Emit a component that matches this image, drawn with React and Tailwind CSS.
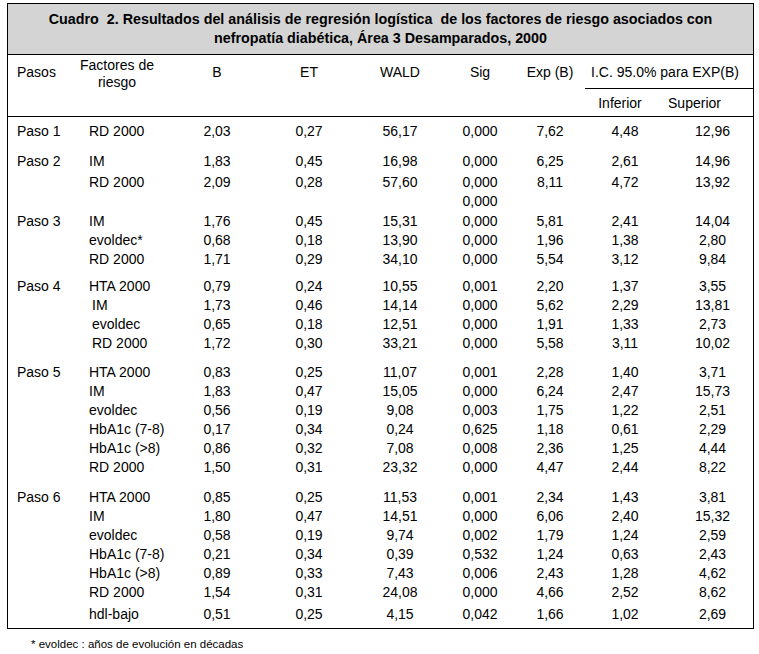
import React from "react";

const COLS = "grid grid-cols-[72px_91px_92px_92px_90px_70px_70px_70px_98px]";

const groups = [
  {
    paso: "Paso 1",
    mt: "mt-[5px]",
    rows: [["RD 2000", "2,03", "0,27", "56,17", "0,000", "7,62", "4,48", "12,96"]],
  },
  {
    paso: "Paso 2",
    mt: "mt-[11px]",
    rows: [
      ["IM", "1,83", "0,45", "16,98", "0,000", "6,25", "2,61", "14,96"],
      ["RD 2000", "2,09", "0,28", "57,60", "0,000", "8,11", "4,72", "13,92"],
      ["", "", "", "", "0,000", "", "", ""],
    ],
  },
  {
    paso: "Paso 3",
    mt: "mt-[1px]",
    rows: [
      ["IM", "1,76", "0,45", "15,31", "0,000", "5,81", "2,41", "14,04"],
      ["evoldec*", "0,68", "0,18", "13,90", "0,000", "1,96", "1,38", "2,80"],
      ["RD 2000", "1,71", "0,29", "34,10", "0,000", "5,54", "3,12", "9,84"],
    ],
  },
  {
    paso: "Paso 4",
    mt: "mt-[8px]",
    indent: true,
    rows: [
      ["HTA 2000", "0,79", "0,24", "10,55", "0,001", "2,20", "1,37", "3,55"],
      ["IM", "1,73", "0,46", "14,14", "0,000", "5,62", "2,29", "13,81"],
      ["evoldec", "0,65", "0,18", "12,51", "0,000", "1,91", "1,33", "2,73"],
      ["RD 2000", "1,72", "0,30", "33,21", "0,000", "5,58", "3,11", "10,02"],
    ],
  },
  {
    paso: "Paso 5",
    mt: "mt-[10px]",
    rows: [
      ["HTA 2000", "0,83", "0,25", "11,07", "0,001", "2,28", "1,40", "3,71"],
      ["IM", "1,83", "0,47", "15,05", "0,000", "6,24", "2,47", "15,73"],
      ["evoldec", "0,56", "0,19", "9,08", "0,003", "1,75", "1,22", "2,51"],
      ["HbA1c (7-8)", "0,17", "0,34", "0,24", "0,625", "1,18", "0,61", "2,29"],
      ["HbA1c (>8)", "0,86", "0,32", "7,08", "0,008", "2,36", "1,25", "4,44"],
      ["RD 2000", "1,50", "0,31", "23,32", "0,000", "4,47", "2,44", "8,22"],
    ],
  },
  {
    paso: "Paso 6",
    mt: "mt-[11px]",
    rows: [
      ["HTA 2000", "0,85", "0,25", "11,53", "0,001", "2,34", "1,43", "3,81"],
      ["IM", "1,80", "0,47", "14,51", "0,000", "6,06", "2,40", "15,32"],
      ["evoldec", "0,58", "0,19", "9,74", "0,002", "1,79", "1,24", "2,59"],
      ["HbA1c (7-8)", "0,21", "0,34", "0,39", "0,532", "1,24", "0,63", "2,43"],
      ["HbA1c (>8)", "0,89", "0,33", "7,43", "0,006", "2,43", "1,28", "4,62"],
      ["RD 2000", "1,54", "0,31", "24,08", "0,000", "4,66", "2,52", "8,62"],
      ["hdl-bajo", "0,51", "0,25", "4,15", "0,042", "1,66", "1,02", "2,69"],
    ],
  },
];

function Row({ paso, cells, indent, extraTop }) {
  return (
    <div className={`${COLS} h-[19px] items-center leading-[19px] ${extraTop}`}>
      <div className="pl-[9px]">{paso}</div>
      <div className={indent ? "pl-[12px]" : "pl-[9px]"}>{cells[0]}</div>
      <div className="text-center">{cells[1]}</div>
      <div className="text-center">{cells[2]}</div>
      <div className="text-center">{cells[3]}</div>
      <div className="text-center">{cells[4]}</div>
      <div className="text-center">{cells[5]}</div>
      <div className="text-center pl-[10px]">{cells[6]}</div>
      <div className="text-center pl-[17px]">{cells[7]}</div>
    </div>
  );
}

export default function App() {
  return (
    <div className="w-[759px] h-[654px] bg-white text-black font-['Liberation_Sans',Arial,sans-serif] text-[14px] pt-[3px]">
      <div className="ml-[7px] w-[747px] border border-black">
        {/* Title band */}
        <div className="h-[51px] bg-[#d4d4d4] border-b border-black flex flex-col items-center justify-center font-bold text-[14.3px] leading-[19px]">
          <div>Cuadro{"\u00a0"} 2. Resultados del análisis de regresión logística{"\u00a0"} de los factores de riesgo asociados con</div>
          <div>nefropatía diabética, Área 3 Desamparados, 2000</div>
        </div>

        {/* Header */}
        <div className={`${COLS} grid-rows-[34px_27px] border-b border-black leading-[17px]`}>
          <div className="row-span-2 pl-[9px] pt-[9px]">Pasos</div>
          <div className="row-span-2 pt-[2px] pr-[17px] text-center">
            Factores de
            <br />
            riesgo
          </div>
          <div className="row-span-2 pt-[9px] text-center">B</div>
          <div className="row-span-2 pt-[9px] text-center">ET</div>
          <div className="row-span-2 pt-[9px] text-center">WALD</div>
          <div className="row-span-2 pt-[9px] text-center">Sig</div>
          <div className="row-span-2 pt-[9px] text-center">Exp (B)</div>
          <div className="col-span-2 pt-[9px] pr-[8px] text-center border-b border-black">I.C. 95.0% para EXP(B)</div>
          <div className="flex items-center justify-center pt-[2px]">Inferior</div>
          <div className="flex items-center justify-center pr-[19px] pt-[2px]">Superior</div>
        </div>

        {/* Body */}
        <div className="pb-[4px]">
          {groups.map((g, gi) => (
            <div key={gi} className={g.mt}>
              {g.rows.map((r, ri) => (
                <Row
                  key={ri}
                  paso={ri === 0 ? g.paso : ""}
                  cells={r}
                  indent={g.indent && ri > 0}
                  extraTop={
                    r[0] === "hdl-bajo"
                      ? "mt-[3px]"
                      : g.paso === "Paso 2" && ri === 1
                      ? "mt-[2px]"
                      : ""
                  }
                />
              ))}
            </div>
          ))}
        </div>
      </div>
      <div className="pl-[31px] mt-[8px] text-[11.5px] leading-[14px]">* evoldec : años de evolución en décadas</div>
    </div>
  );
}
